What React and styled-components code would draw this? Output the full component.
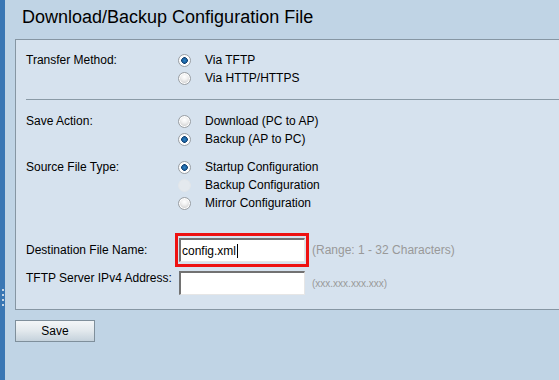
import React from "react";
import styled, { createGlobalStyle } from "styled-components";

const Global = createGlobalStyle`
  html, body { margin: 0; padding: 0; }
  body {
    background: #c0d4e5;
    font-family: Arial, "Liberation Sans", sans-serif;
    font-size: 12px;
    color: #000;
  }
`;

const Page = styled.div`
  display: flex;
  width: 559px;
  height: 380px;
  overflow: hidden;
`;

const Strip = styled.div`
  width: 5px;
  flex: none;
  background: #3a77b4;
  display: flex;
  flex-direction: column;
  align-items: center;
  padding-top: 289px;
  gap: 3px;
  box-sizing: border-box;
`;

const GripDot = styled.span`
  width: 2px;
  height: 2px;
  background: #c8d6e4;
`;

const Main = styled.div`
  flex: 1;
  min-width: 0;
  padding-left: 10px;
  display: flex;
  flex-direction: column;
`;

const Title = styled.h1`
  margin: 0;
  height: 39px;
  padding-left: 7px;
  font-size: 18px;
  font-weight: normal;
  line-height: 35px;
  color: #000;
  white-space: nowrap;
`;

const Panel = styled.div`
  background: #d6e2ee;
  border: 1px solid #8696a3;
  border-right: none;
  margin-right: -20px;
  padding: 11px 0 14px 10px;
`;

const Row = styled.div`
  display: grid;
  grid-template-columns: 152px 1fr;
  align-items: ${(p) => p.$align || "start"};
  margin-top: ${(p) => p.$mt || 0}px;
`;

const Label = styled.div`
  line-height: ${(p) => p.$lh || 18}px;
  white-space: nowrap;
`;

const Options = styled.div`
  display: flex;
  flex-direction: column;
`;

const Option = styled.div`
  display: flex;
  align-items: center;
  height: 18px;
  gap: 14px;
  white-space: nowrap;
`;

const Radio = styled.span`
  position: relative;
  width: 13px;
  height: 13px;
  border-radius: 50%;
  box-sizing: border-box;
  flex: none;
  border: 1px solid ${(p) => (p.$disabled ? "#e2e6ea" : "#9a9fa4")};
  background: ${(p) =>
    p.$disabled
      ? "#e4e9ee"
      : p.$checked
      ? "radial-gradient(circle at 50% 50%, #2b86c8 0, #1d5f9c 2.2px, #0f3f70 3px, #ffffff 3.6px, #f4f4f4 5px)"
      : "radial-gradient(circle at 50% 35%, #ffffff 0, #f1f1f1 3px, #d6d6d6 6px)"};
  box-shadow: ${(p) => (p.$disabled ? "none" : "inset 0 0 0 1px #ffffff")};
`;

const Separator = styled.div`
  height: 1px;
  background: #8a9aa6;
  margin: 12px 0 12px 0;
`;

const Controls = styled.div`
  display: flex;
  align-items: center;
`;

const Highlight = styled.div`
  border: 3px solid #ee1111;
  padding: 2px 1px;
  margin-left: -3px;
  display: flex;
`;

const TextBox = styled.div`
  box-sizing: border-box;
  width: 126px;
  height: 24px;
  margin-left: ${(p) => p.$ml || 0}px;
  background: #ffffff;
  border-top: 2px solid #727272;
  border-left: 2px solid #727272;
  border-right: 1px solid #e6e6e6;
  border-bottom: 1px solid #e6e6e6;
  padding-left: 1px;
  display: flex;
  align-items: center;
  font-size: 12px;
  white-space: nowrap;
`;

const Caret = styled.span`
  display: inline-block;
  width: 1px;
  height: 14px;
  background: #000;
  margin-left: 1px;
`;

const Hint = styled.span`
  color: #999999;
  font-size: ${(p) => p.$size || 12}px;
  margin-left: ${(p) => p.$ml || 0}px;
  white-space: nowrap;
`;

const SaveButton = styled.button`
  margin-top: 10px;
  width: 80px;
  height: 22px;
  border: 1px solid #7f8f9b;
  background: linear-gradient(#f3f6f8 0%, #e4eaee 45%, #c5d2dc 100%);
  font-family: Arial, "Liberation Sans", sans-serif;
  font-size: 12px;
  color: #000;
  padding: 0;
  align-self: flex-start;
`;

function RadioOption({ checked, disabled, children }) {
  return (
    <Option>
      <Radio $checked={checked} $disabled={disabled} />
      <span>{children}</span>
    </Option>
  );
}

export default function App() {
  return (
    <>
      <Global />
      <Page>
        <Strip>
          <GripDot />
          <GripDot />
          <GripDot />
          <GripDot />
        </Strip>
        <Main>
          <Title>Download/Backup Configuration File</Title>
          <Panel>
            <Row>
              <Label>Transfer Method:</Label>
              <Options>
                <RadioOption checked>Via TFTP</RadioOption>
                <RadioOption>Via HTTP/HTTPS</RadioOption>
              </Options>
            </Row>
            <Separator />
            <Row>
              <Label>Save Action:</Label>
              <Options>
                <RadioOption>Download (PC to AP)</RadioOption>
                <RadioOption checked>Backup (AP to PC)</RadioOption>
              </Options>
            </Row>
            <Row $mt={10}>
              <Label>Source File Type:</Label>
              <Options>
                <RadioOption checked>Startup Configuration</RadioOption>
                <RadioOption disabled>Backup Configuration</RadioOption>
                <RadioOption>Mirror Configuration</RadioOption>
              </Options>
            </Row>
            <Row $mt={21} $align="center">
              <Label>Destination File Name:</Label>
              <Controls>
                <Highlight>
                  <TextBox>
                    config.xml
                    <Caret />
                  </TextBox>
                </Highlight>
                <Hint $ml={3}>(Range: 1 - 32 Characters)</Hint>
              </Controls>
            </Row>
            <Row $mt={4}>
              <Label $lh={14}>TFTP Server IPv4 Address:</Label>
              <Controls>
                <TextBox $ml={1} />
                <Hint $ml={7} $size={10}>
                  (xxx.xxx.xxx.xxx)
                </Hint>
              </Controls>
            </Row>
          </Panel>
          <SaveButton>Save</SaveButton>
        </Main>
      </Page>
    </>
  );
}
